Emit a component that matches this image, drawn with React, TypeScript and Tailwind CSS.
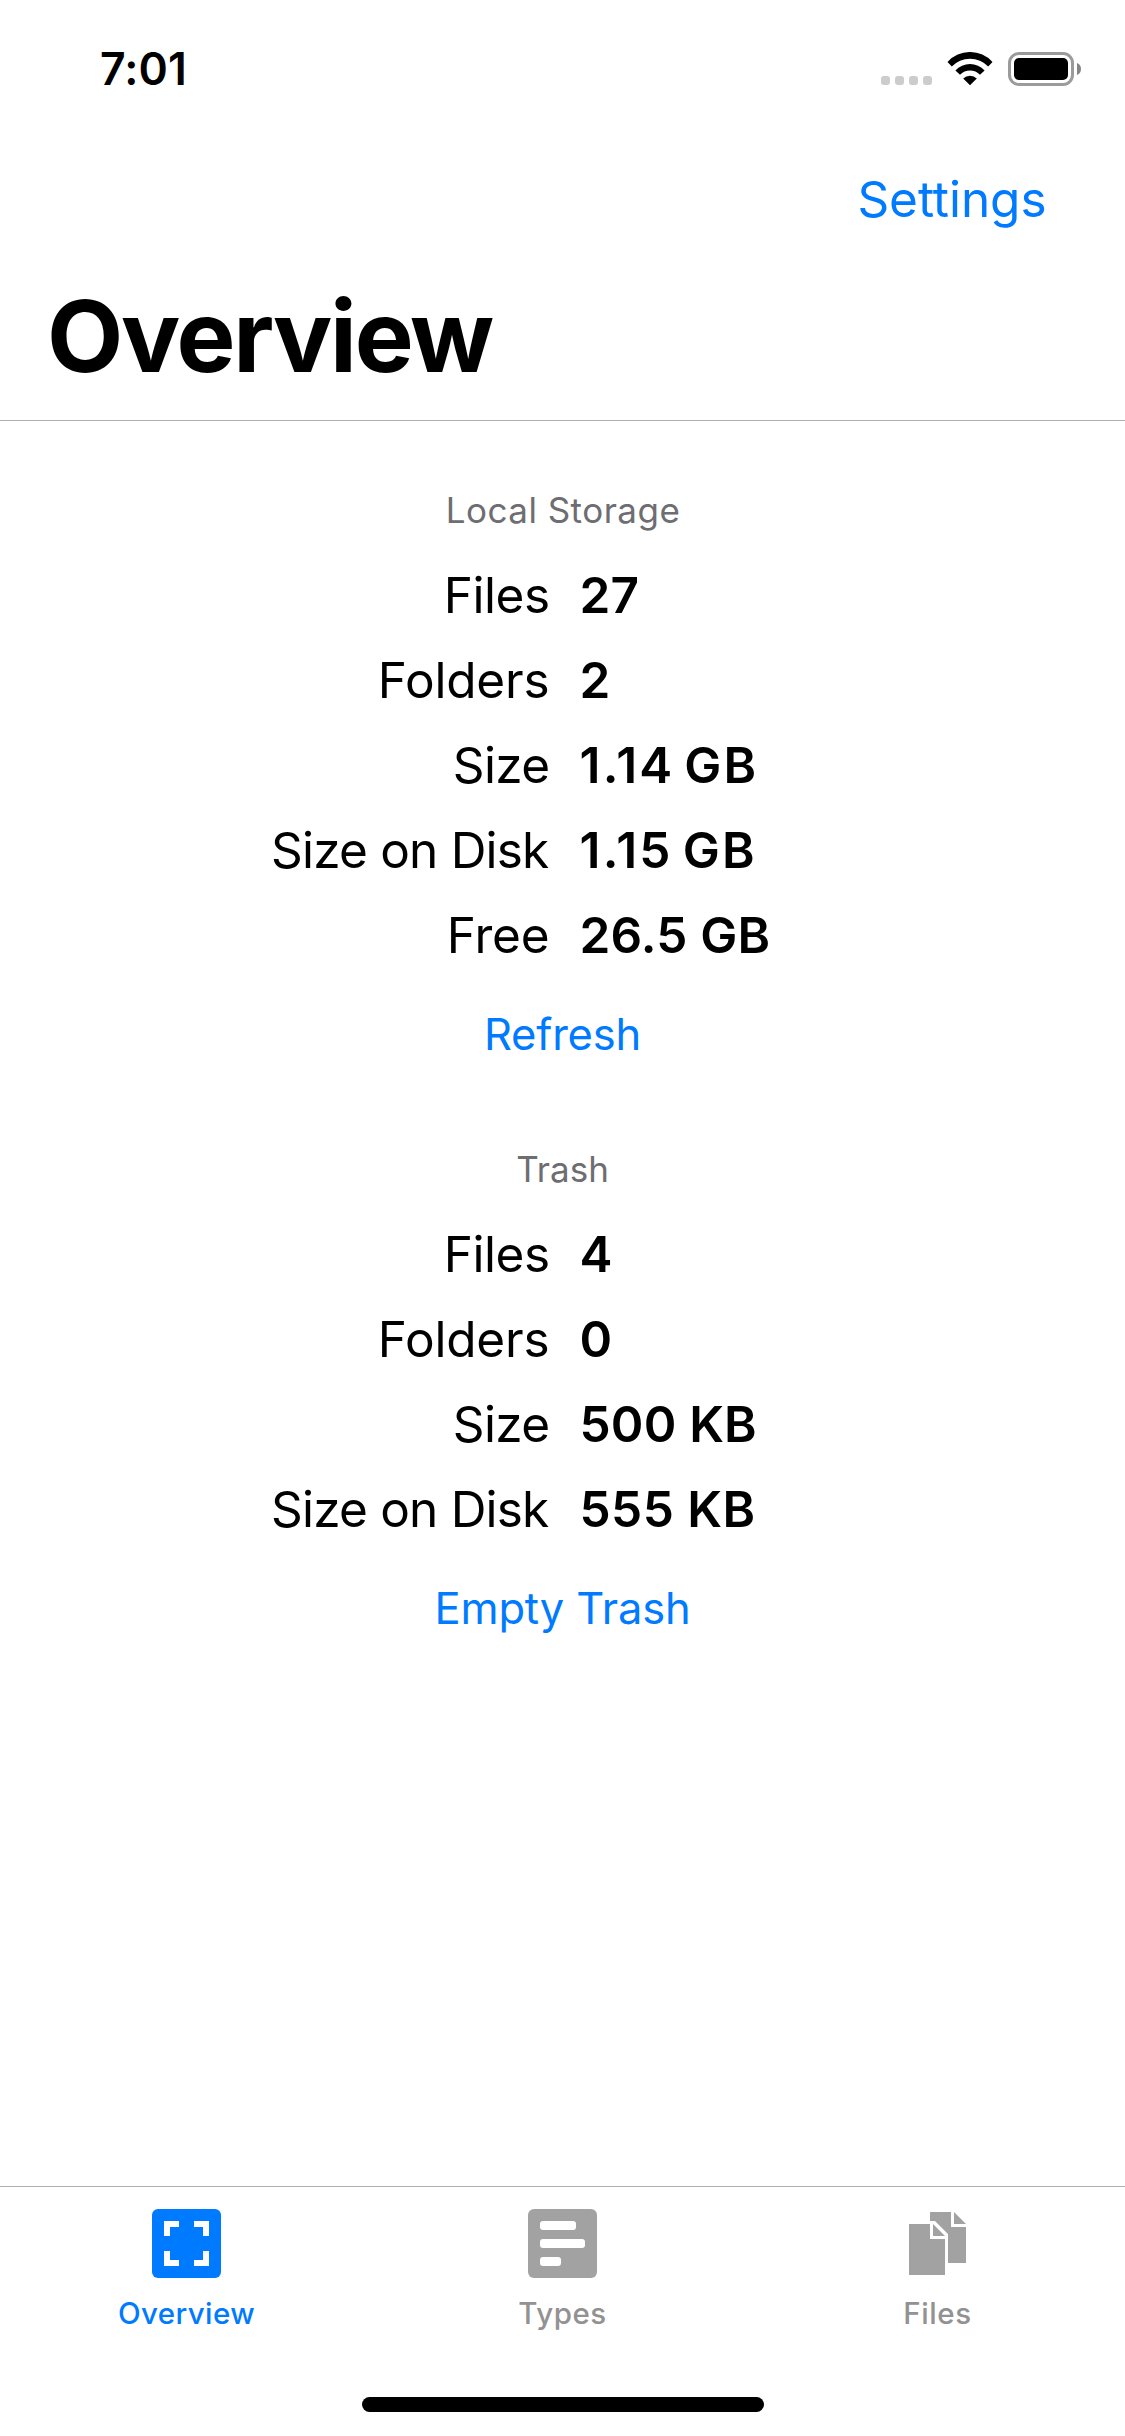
import type { ReactNode } from 'react';

type Row = { label: string; value: string; labelClass: string; valueClass: string };

const LABELS = {
  files: 'tracking-[-0.51px]',
  folders: 'tracking-[-0.17px]',
  size: 'tracking-[-0.62px]',
  disk: 'pr-[1px] tracking-[-0.8px]',
  free: 'tracking-[-0.15px]',
};

const localRows: Row[] = [
  { label: 'Files', value: '27', labelClass: LABELS.files, valueClass: 'tracking-[0.16px]' },
  { label: 'Folders', value: '2', labelClass: LABELS.folders, valueClass: '' },
  { label: 'Size', value: '1.14 GB', labelClass: LABELS.size, valueClass: 'tracking-[2.2px] [word-spacing:-5px]' },
  { label: 'Size on Disk', value: '1.15 GB', labelClass: LABELS.disk, valueClass: 'tracking-[2.2px] [word-spacing:-4.600px]' },
  { label: 'Free', value: '26.5 GB', labelClass: LABELS.free, valueClass: 'tracking-[0.17px]' },
];

const trashRows: Row[] = [
  { label: 'Files', value: '4', labelClass: LABELS.files, valueClass: '' },
  { label: 'Folders', value: '0', labelClass: LABELS.folders, valueClass: '' },
  { label: 'Size', value: '500 KB', labelClass: LABELS.size, valueClass: 'tracking-[0.18px]' },
  { label: 'Size on Disk', value: '555 KB', labelClass: LABELS.disk, valueClass: 'tracking-[0.47px]' },
];

function WifiIcon() {
  return (
    <svg width="46" height="34" viewBox="87 22 46 34" fill="#000">
      <path d="M87.5 32A30.3 30.3 0 0 1 132.5 32L128.2 36.6A25 25 0 0 0 91.8 36.6Z" />
      <path d="M95.4 40.4A20 20 0 0 1 124.6 40.4L120 44.8A13.6 13.6 0 0 0 100 44.8Z" />
      <path d="M103.2 48.6A9.6 9.6 0 0 1 116.8 48.6L110 55.2Z" />
    </svg>
  );
}

function StatusBar() {
  return (
    <div className="flex h-[132px] items-start justify-between pr-[44px] pl-[100px]">
      <span className="mt-[39px] text-[44.5px] leading-[60px] font-semibold tracking-[0.11px]">7:01</span>
      <div className="mt-[52px] flex h-[34px] items-start">
        <div className="mt-[24px] mr-[15px] flex gap-[5px]">
          {[0, 1, 2, 3].map((i) => (
            <span key={i} className="size-[9px] rounded-[3px] bg-[#cccccc]" />
          ))}
        </div>
        <WifiIcon />
        <div className="ml-[15px] h-[34px] w-[66px] rounded-[11px] border-[3px] border-[#9b9b9b] p-[3px]">
          <div className="h-full w-full rounded-[5px] bg-black" />
        </div>
        <svg className="mt-[11px] ml-[3px]" width="4" height="12" viewBox="0 0 4 12">
          <path d="M0 0C2.6 1 4 3.300 4 6S2.600 11 0 12Z" fill="#858585" />
        </svg>
      </div>
    </div>
  );
}

function Section({ title, titleClass, rows, children }: { title: string; titleClass: string; rows: Row[]; children: ReactNode }) {
  return (
    <section>
      <h2 className={`flex h-[84px] items-center justify-center pt-px text-[35px] text-[#6d6d72] ${titleClass}`}>{title}</h2>
      {rows.map((r) => (
        <div key={r.label} className="flex h-[85px] items-center gap-[30px] text-[49.5px] leading-[60px]">
          <span className={`w-[549.5px] text-right ${r.labelClass}`}>{r.label}</span>
          <span className={`font-semibold ${r.valueClass}`}>{r.value}</span>
        </div>
      ))}
      <div className="flex h-[113px] items-center justify-center pt-[3px] text-[43.5px] text-[#007aff]">{children}</div>
    </section>
  );
}

function OverviewIcon() {
  return (
    <svg width="69" height="69" viewBox="0 0 69 69">
      <rect width="69" height="69" rx="6" fill="#007aff" />
      <path
        d="M12 12h15v6h-9v9h-6ZM42 12h15v15h-6v-9h-9ZM12 42h6v9h9v6h-15ZM51 42h6v15h-15v-6h9Z"
        fill="#fff"
      />
    </svg>
  );
}

function TypesIcon() {
  return (
    <svg width="69" height="69" viewBox="0 0 69 69">
      <rect width="69" height="69" rx="6" fill="#a2a2a2" />
      <g fill="#fff">
        <rect x="12" y="12" width="36" height="9" rx="3" />
        <rect x="12" y="30" width="45" height="9" rx="3" />
        <rect x="12" y="48" width="21" height="9" rx="3" />
      </g>
    </svg>
  );
}

function FilesIcon() {
  return (
    <svg width="57" height="69" viewBox="0 -3 57 69" fill="#a2a2a2">
      <path d="M0 12h21v15h15v36h-36Z" />
      <path d="M24 12v12h12Z" />
      <path d="M21 0h21v15h15v36h-18V22L26 9h-5Z" />
      <path d="M45 0v12h12Z" />
    </svg>
  );
}

function Tab({ icon, label, className }: { icon: ReactNode; label: string; className: string }) {
  return (
    <button className={`flex w-[375px] flex-col items-center pt-[22px] ${className}`}>
      {icon}
      <span className="mt-[15px] text-[29.5px] leading-[40px] font-medium">{label}</span>
    </button>
  );
}

export default function App() {
  return (
    <div className="flex h-[2436px] w-[1125px] flex-col bg-white font-['Inter',sans-serif] text-black">
      <StatusBar />
      <header className="border-b border-[#b0b0b0]">
        <div className="flex h-[132px] items-center justify-end pt-[2px] pr-[78.5px] text-[49.5px] tracking-[-0.05px] text-[#007aff]">
          <button>Settings</button>
        </div>
        <h1 className="flex h-[156px] items-center pb-[12px] pl-[47px] text-[99px] leading-[120px] font-bold tracking-[-2.2px]">
          Overview
        </h1>
      </header>
      <main className="flex flex-1 flex-col gap-[37px] pt-[47px]">
        <Section title="Local Storage" titleClass="pl-[1px] tracking-[0.48px]" rows={localRows}>
          <button className="tracking-[-0.2px]">Refresh</button>
        </Section>
        <Section title="Trash" titleClass="tracking-[0.02px]" rows={trashRows}>
          <button className="tracking-[-0.15px]">Empty Trash</button>
        </Section>
      </main>
      <nav className="flex h-[211px] border-t border-[#b0b0b0]">
        <Tab icon={<OverviewIcon />} label="Overview" className="pr-[2px] tracking-[0.4px] text-[#007aff]" />
        <Tab icon={<TypesIcon />} label="Types" className="tracking-[0.51px] text-[#929292]" />
        <Tab icon={<FilesIcon />} label="Files" className="tracking-[0.61px] text-[#929292]" />
      </nav>
      <div className="flex h-[39px] justify-center">
        <div className="h-[15px] w-[402px] rounded-full bg-black" />
      </div>
    </div>
  );
}
